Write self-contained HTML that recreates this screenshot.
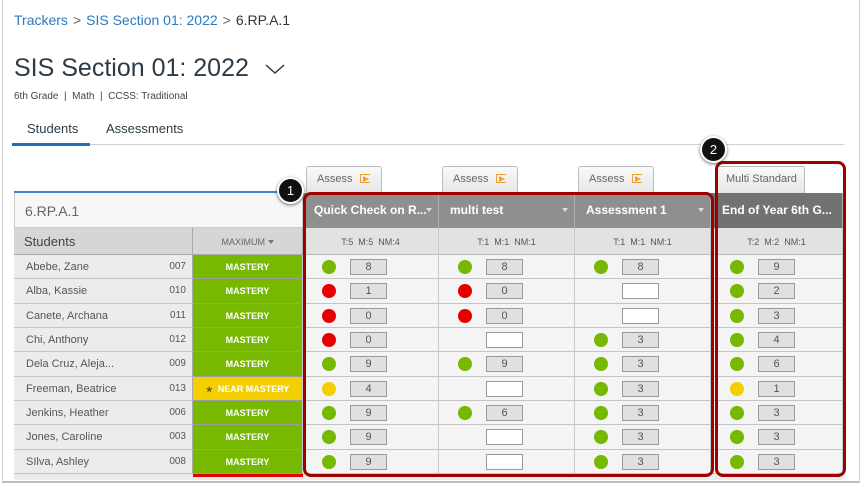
<!DOCTYPE html>
<html><head><meta charset="utf-8"><style>
*{box-sizing:border-box;margin:0;padding:0}
body{width:862px;height:485px;overflow:hidden;background:#fff;font-family:"Liberation Sans",sans-serif;position:relative}
.frame{position:absolute;left:2px;top:0;width:858px;height:483px;border-left:1px solid #cfcfcf;border-right:1px solid #cfcfcf;border-bottom:2px solid #bdbdbd}
.a{position:absolute}
.bc{left:14px;top:12px;font-size:14px;color:#2b7abc}
.bc span.g{color:#666;margin:0 5px}
.bc span.k{color:#333}
.title{left:14px;top:54px;font-size:25px;color:#2d3b45}
.sub{left:14px;top:91px;font-size:10px;color:#444}
.tab{top:121px;font-size:13px;color:#2d3b45}
.btn{top:166px;height:27px;border:1px solid #bbb;border-bottom:none;border-radius:3px 3px 0 0;background:linear-gradient(#fafafa,#e6e6e6);font-size:11px;color:#666;padding:6px 0 0 10px}
.ic{display:inline-block;width:10px;height:9px;border:1.5px solid #f0a030;border-right:none;margin-left:8px;vertical-align:-1px;position:relative}
.ic:after{content:"";position:absolute;left:2px;top:1px;border-left:6px solid #f0a030;border-top:3px solid transparent;border-bottom:3px solid transparent}
.row{position:absolute;left:14px;width:829px;display:flex}
.row>div{height:100%;border-bottom:1px solid #c4c4c4;position:relative}
.n{width:179px;background:#ececec;font-size:11px;color:#555;padding:6px 0 0 12px;border-right:1px solid #aaa}
.n b{position:absolute;right:6px;top:6px;font-weight:normal;font-size:10px}
.m{width:110px;background:#76b900;color:#fff;font-size:9px;font-weight:bold;text-align:center;padding-top:7px;border-right:1px solid #c9c9c9;border-bottom-color:#9c9c9c!important}
.m.y{background:#f3cf00}
.c{width:136px;background:#f4f4f4;border-right:1px solid #c9c9c9}
.c.l{width:132px}
.d{position:absolute;left:19px;top:5px;width:14px;height:14px;border-radius:50%}
.G{background:#76b900}.R{background:#e60000}.Y{background:#f3cf00}
.v{position:absolute;left:47px;top:4px;width:37px;height:16px;border:1px solid #999;background:#e0e0e0;font-size:11px;color:#555;text-align:center;line-height:14px}
.v.w{background:#fff}
.hd{top:193px;height:35px;background:#8f8f8f;color:#fff;font-weight:bold;font-size:12px;padding:10px 0 0 11px;border-right:1px solid #b0b0b0}
.hd i{position:absolute;right:6px;top:15px;border-left:3px solid transparent;border-right:3px solid transparent;border-top:4px solid #ddd}
.sh{top:228px;height:27px;background:#e2e2e2;font-size:9px;color:#555;text-align:center;padding-top:9px;border-right:1px solid #c9c9c9;border-bottom:1px solid #bbb}
.red{border:3.5px solid #a00000;border-radius:8px}
.num{width:27px;height:27px;border-radius:50%;background:#111;border:2px solid #fff;color:#fff;font-size:13px;text-align:center;line-height:23px;box-shadow:0 1px 3px rgba(0,0,0,.6)}
</style></head><body>
<div class="frame"></div>
<div class="a bc">Trackers<span class="g">&gt;</span>SIS Section 01: 2022<span class="g">&gt;</span><span class="k">6.RP.A.1</span></div>
<div class="a title">SIS Section 01: 2022 <svg width="22" height="14" style="margin-left:8px" viewBox="0 0 22 14"><path d="M2 3 L11 11 L20 3" fill="none" stroke="#2d3b45" stroke-width="1.5"/></svg></div>
<div class="a sub">6th Grade &nbsp;|&nbsp; Math &nbsp;|&nbsp; CCSS: Traditional</div>
<div class="a tab" style="left:27px">Students</div>
<div class="a tab" style="left:106px">Assessments</div>
<div class="a" style="left:12px;top:144px;width:832px;height:1px;background:#d0d0d0"></div>
<div class="a" style="left:12px;top:143px;width:78px;height:3px;background:#1e70b8"></div>

<div class="a btn" style="left:306px;width:76px">Assess<span class="ic"></span></div>
<div class="a btn" style="left:442px;width:76px">Assess<span class="ic"></span></div>
<div class="a btn" style="left:578px;width:76px">Assess<span class="ic"></span></div>
<div class="a btn" style="left:716px;width:89px;padding-left:9px">Multi Standard</div>

<div class="a" style="left:14px;top:191px;width:289px;height:2px;background:#3d86d4"></div>
<div class="a" style="left:14px;top:193px;width:289px;height:35px;background:#f7f7f7;border:1px solid #ccc;border-top:none;font-size:14px;color:#666;padding:10px 0 0 10px">6.RP.A.1</div>
<div class="a" style="left:14px;top:228px;width:179px;height:27px;background:#d6d6d6;border-right:1px solid #aaa;border-bottom:1px solid #aaa;font-size:13px;color:#444;padding:6px 0 0 10px">Students</div>
<div class="a" style="left:193px;top:228px;width:110px;height:27px;background:#d6d6d6;border-bottom:1px solid #aaa;font-size:9px;color:#666;text-align:center;padding-top:9px;border-right:1px solid #aaa">MAXIMUM <span style="display:inline-block;border-left:3px solid transparent;border-right:3px solid transparent;border-top:4px solid #777;vertical-align:1px"></span></div>

<div class="a hd" style="left:303px;width:136px">Quick Check on R...<i></i></div>
<div class="a hd" style="left:439px;width:136px">multi test<i></i></div>
<div class="a hd" style="left:575px;width:136px">Assessment 1<i></i></div>
<div class="a hd" style="left:711px;width:132px;background:#727272">End of Year 6th G...</div>
<div class="a sh" style="left:303px;width:136px">T:5 &nbsp;M:5 &nbsp;NM:4</div>
<div class="a sh" style="left:439px;width:136px">T:1 &nbsp;M:1 &nbsp;NM:1</div>
<div class="a sh" style="left:575px;width:136px">T:1 &nbsp;M:1 &nbsp;NM:1</div>
<div class="a sh" style="left:711px;width:132px">T:2 &nbsp;M:2 &nbsp;NM:1</div>

<div class="row" style="top:255px;height:24px"><div class="n">Abebe, Zane<b>007</b></div><div class="m">MASTERY</div><div class="c"><span class="d G"></span><span class="v">8</span></div><div class="c"><span class="d G"></span><span class="v">8</span></div><div class="c"><span class="d G"></span><span class="v">8</span></div><div class="c l"><span class="d G"></span><span class="v">9</span></div></div>
<div class="row" style="top:279px;height:25px"><div class="n">Alba, Kassie<b>010</b></div><div class="m">MASTERY</div><div class="c"><span class="d R"></span><span class="v">1</span></div><div class="c"><span class="d R"></span><span class="v">0</span></div><div class="c"><span class="v w"></span></div><div class="c l"><span class="d G"></span><span class="v">2</span></div></div>
<div class="row" style="top:304px;height:24px"><div class="n">Canete, Archana<b>011</b></div><div class="m">MASTERY</div><div class="c"><span class="d R"></span><span class="v">0</span></div><div class="c"><span class="d R"></span><span class="v">0</span></div><div class="c"><span class="v w"></span></div><div class="c l"><span class="d G"></span><span class="v">3</span></div></div>
<div class="row" style="top:328px;height:24px"><div class="n">Chi, Anthony<b>012</b></div><div class="m">MASTERY</div><div class="c"><span class="d R"></span><span class="v">0</span></div><div class="c"><span class="v w"></span></div><div class="c"><span class="d G"></span><span class="v">3</span></div><div class="c l"><span class="d G"></span><span class="v">4</span></div></div>
<div class="row" style="top:352px;height:25px"><div class="n">Dela Cruz, Aleja...<b>009</b></div><div class="m">MASTERY</div><div class="c"><span class="d G"></span><span class="v">9</span></div><div class="c"><span class="d G"></span><span class="v">9</span></div><div class="c"><span class="d G"></span><span class="v">3</span></div><div class="c l"><span class="d G"></span><span class="v">6</span></div></div>
<div class="row" style="top:377px;height:24px"><div class="n">Freeman, Beatrice<b>013</b></div><div class="m y"><span style="color:#7a6000;font-size:8px">★</span>&nbsp; NEAR MASTERY</div><div class="c"><span class="d Y"></span><span class="v">4</span></div><div class="c"><span class="v w"></span></div><div class="c"><span class="d G"></span><span class="v">3</span></div><div class="c l"><span class="d Y"></span><span class="v">1</span></div></div>
<div class="row" style="top:401px;height:24px"><div class="n">Jenkins, Heather<b>006</b></div><div class="m">MASTERY</div><div class="c"><span class="d G"></span><span class="v">9</span></div><div class="c"><span class="d G"></span><span class="v">6</span></div><div class="c"><span class="d G"></span><span class="v">3</span></div><div class="c l"><span class="d G"></span><span class="v">3</span></div></div>
<div class="row" style="top:425px;height:25px"><div class="n">Jones, Caroline<b>003</b></div><div class="m">MASTERY</div><div class="c"><span class="d G"></span><span class="v">9</span></div><div class="c"><span class="v w"></span></div><div class="c"><span class="d G"></span><span class="v">3</span></div><div class="c l"><span class="d G"></span><span class="v">3</span></div></div>
<div class="row" style="top:450px;height:24px"><div class="n">SIlva, Ashley<b>008</b></div><div class="m">MASTERY</div><div class="c"><span class="d G"></span><span class="v">9</span></div><div class="c"><span class="v w"></span></div><div class="c"><span class="d G"></span><span class="v">3</span></div><div class="c l"><span class="d G"></span><span class="v">3</span></div></div>
<div class="a" style="left:14px;top:474px;width:829px;height:6px;background:#ececec"></div>
<div class="a" style="left:193px;top:474px;width:110px;height:3px;background:#e60000"></div>

<div class="a red" style="left:303px;top:192px;width:411px;height:285px"></div>
<div class="a red" style="left:715px;top:161px;width:131px;height:316px"></div>
<div class="a num" style="left:277px;top:177px">1</div>
<div class="a num" style="left:700px;top:136px">2</div>
</body></html>
